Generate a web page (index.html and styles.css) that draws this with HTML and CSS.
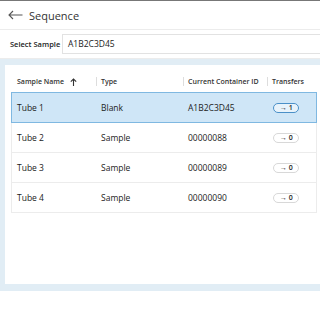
FILE: index.html
```html
<!DOCTYPE html>
<html lang="en">
<head>
	<meta charset="UTF-8" />
	<title>Sequence</title>
	<link rel="stylesheet" href="styles.css">
</head>
<body>
	<div class="page">
		<div class="topbar">
			<svg class="back" width="15" height="10" viewBox="0 0 15 10">
				<path d="M14.5 5H1M5 1L1 5l4 4" fill="none" stroke="#555" stroke-width="1.1"/>
			</svg>
			<span class="title">Sequence</span>
		</div>
		<div class="selectRow">
			<span class="selLabel">Select Sample</span>
			<div class="selInput">A1B2C3D45</div>
		</div>
		<div class="panel">
			<div class="card">
				<div class="tbl">
					<div class="row head">
						<div class="cell c1">Sample Name
							<svg class="sort" width="7" height="8" viewBox="0 0 7 8"><path d="M3.5 8V1M0.8 3.6L3.5 1l2.7 2.6" fill="none" stroke="#333" stroke-width="1.1"/></svg>
						</div>
						<div class="cell c2"><i class="sep"></i>Type</div>
						<div class="cell c3"><i class="sep"></i>Current Container ID</div>
						<div class="cell c4"><i class="sep"></i>Transfers</div>
					</div>
					<div class="row sel">
						<div class="cell c1">Tube 1</div>
						<div class="cell c2">Blank</div>
						<div class="cell c3">A1B2C3D45</div>
						<div class="cell c4"><span class="pill active">&rarr; 1</span></div>
					</div>
					<div class="row">
						<div class="cell c1">Tube 2</div>
						<div class="cell c2">Sample</div>
						<div class="cell c3">00000088</div>
						<div class="cell c4"><span class="pill">&rarr; 0</span></div>
					</div>
					<div class="row">
						<div class="cell c1">Tube 3</div>
						<div class="cell c2">Sample</div>
						<div class="cell c3">00000089</div>
						<div class="cell c4"><span class="pill">&rarr; 0</span></div>
					</div>
					<div class="row last">
						<div class="cell c1">Tube 4</div>
						<div class="cell c2">Sample</div>
						<div class="cell c3">00000090</div>
						<div class="cell c4"><span class="pill">&rarr; 0</span></div>
					</div>
				</div>
			</div>
		</div>
	</div>
</body>
</html>
```

FILE: styles.css
```css
html, body {
	margin: 0;
	padding: 0;
	background: #fff;
}
body {
	font-family: "Open Sans", "Noto Sans", sans-serif;
	color: #222;
}
.page {
	width: 320px;
	height: 320px;
	overflow: hidden;
}
.topbar {
	height: 28px;
	border-top: 1px solid #777;
	border-bottom: 1px solid #ececec;
	display: flex;
	align-items: center;
	padding-left: 8px;
}
.back {
	margin-right: 6px;
}
.title {
	font-size: 11px;
	color: #333;
}
.selectRow {
	height: 28px;
	border-bottom: 1px solid #ececec;
	display: flex;
	align-items: center;
	padding-left: 10px;
}
.selLabel {
	font-size: 7.5px;
	font-weight: 600;
	width: 52px;
	color: #222;
}
.selInput {
	flex: 1;
	height: 18px;
	border: 1px solid #e2e2e2;
	border-right: none;
	font-size: 8.5px;
	line-height: 18px;
	padding-left: 5px;
	color: #222;
}
.panel {
	background: #e1edf5;
	padding: 6px 0 7px 5px;
}
.card {
	background: #fff;
	height: 213px;
	padding: 6px 3px 0 6px;
}
.tbl {
	border: 1px solid #ececec;
	border-top: none;
}
.row {
	display: flex;
	height: 29px;
	align-items: center;
	border-bottom: 1px solid #ececec;
	font-size: 8.5px;
	border-left: 1px solid transparent;
	border-right: 1px solid transparent;
	margin: 0 -1px;
}
.row.last {
	border-bottom: none;
}
.row.head {
	height: 21px;
	font-size: 7px;
	font-weight: 600;
	color: #333;
	border-bottom: none;
	border-color: #fff;
}
.row.sel {
	background: #cfe6f7;
	border: 1px solid #7fb8e1;
	height: 29px;
}
.cell {
	display: flex;
	align-items: center;
	height: 100%;
	position: relative;
}
.c1 { width: 84px; padding-left: 5px; }
.c2 { width: 87px; }
.c3 { width: 84px; }
.c4 { flex: 1; }
.sep {
	position: absolute;
	left: -5px;
	top: 6px;
	height: 9px;
	border-left: 1px solid #ddd;
}
.sort {
	margin-left: 6px;
}
.pill {
	display: inline-block;
	font-size: 7px;
	font-weight: 600;
	line-height: 8px;
	height: 8px;
	padding: 0 5px 0 6px;
	border: 1px solid #d8d8d8;
	border-radius: 6px;
	background: #fff;
	margin-left: 1px;
}
.pill.active {
	border-color: #4a90c8;
	background: #e8f3fb;
}
```
